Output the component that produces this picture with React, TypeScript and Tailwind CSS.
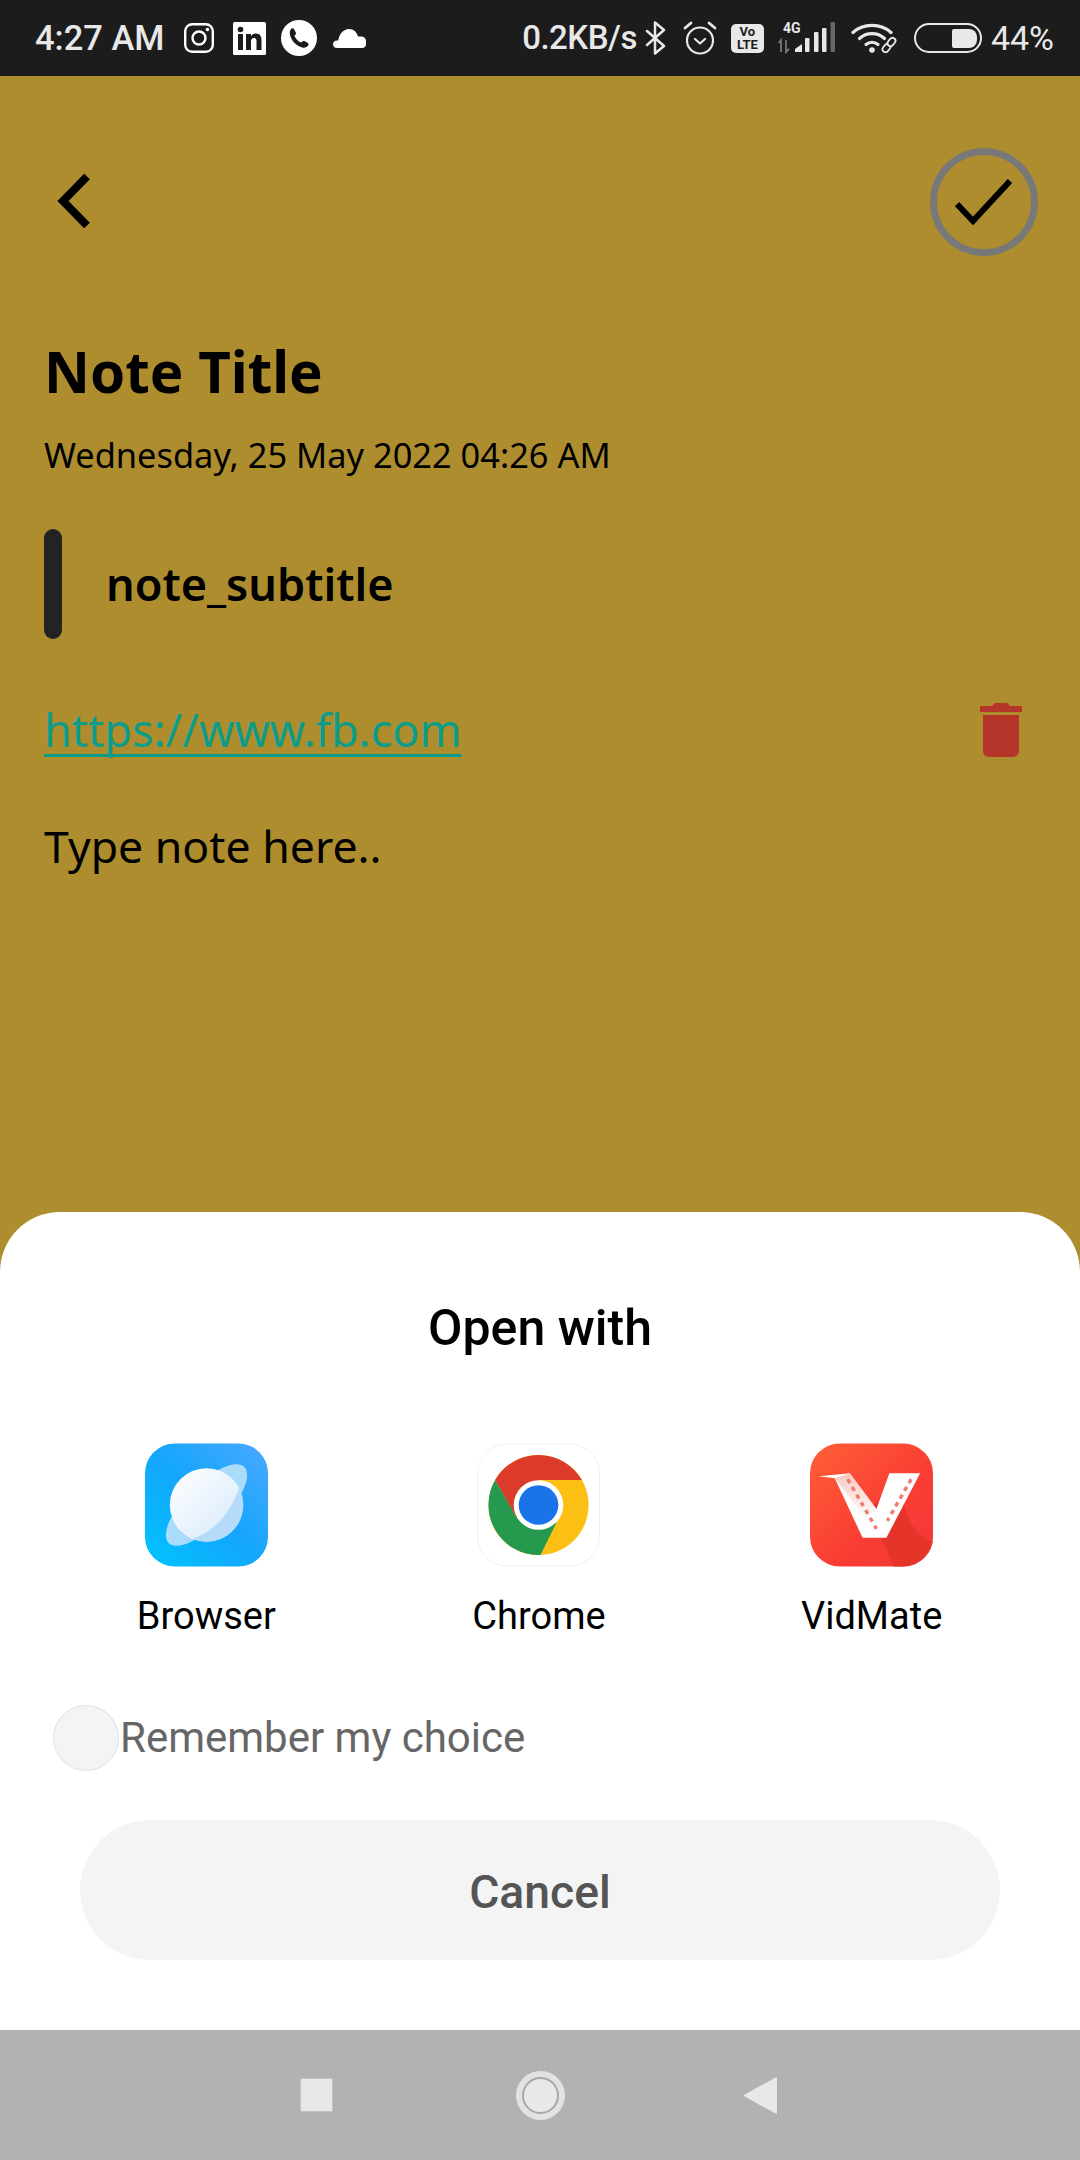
import { useId } from "react"

const Instagram = () => (
  <svg width="30" height="30" viewBox="0 0 30 30" fill="none" stroke="#fff" strokeWidth="2.4">
    <rect x="1.2" y="1.2" width="27.6" height="27.6" rx="7" />
    <circle cx="15" cy="15" r="6.500" />
    <circle cx="23.500" cy="6.500" r="1.800" fill="#fff" stroke="none" />
  </svg>
)

const LinkedIn = () => (
  <svg width="33" height="33" viewBox="0 0 33 33">
    <rect width="33" height="33" rx="1.500" fill="#fff" />
    <rect x="5" y="12" width="5" height="16" fill="#1c1c1c" />
    <circle cx="7.500" cy="7.500" r="2.800" fill="#1c1c1c" />
    <path d="M13 12h5v2.200c1-1.600 2.600-2.600 4.800-2.600 4.300 0 5.700 2.800 5.700 6.800V28h-5v-8.500c0-2-.6-3.500-2.400-3.500-2 0-3.100 1.400-3.100 3.500V28h-5z" fill="#1c1c1c" />
  </svg>
)

const WhatsApp = () => (
  <svg width="36" height="36" viewBox="0 0 36 36">
    <circle cx="18" cy="18" r="18" fill="#fff" />
    <path d="M10 9c1-1 2.400-1.200 3 0l1.800 3.600c.4.8.2 1.500-.4 2.100l-1 1.100c1 2.800 3.600 5.600 6.800 6.800l1.100-1.100c.6-.6 1.400-.8 2.200-.4l3.400 1.800c1 .6.900 2-.2 3.100-1.500 1.500-3.300 2-5.400 1.400-6-1.700-10.500-6.200-12.200-12C8.500 12.800 8.800 10.300 10 9z" fill="#1c1c1c" />
  </svg>
)

const Cloud = () => (
  <svg width="33" height="19" viewBox="0 0 33 19">
    <path d="M4 19C1.500 19 0 17.500 0 15.300c0-2.200 1.800-3.800 4-3.800h1.200C6.200 5 10.500 0 16 0c4.800 0 7.600 3 9 7.400h3.200c2.800 0 4.800 1.900 4.800 4.400v3.500c0 2.400-1.600 3.700-4 3.700z" fill="#fff" />
  </svg>
)

const BluetoothGlyph = () => (
  <svg width="21" height="34" viewBox="0 0 21 34" fill="none" stroke="#e8e8e8" strokeWidth="2.500" strokeLinejoin="round" strokeLinecap="round">
    <path d="M2 10l17 15-9 7.500V1.500L19 9 2 24" />
  </svg>
)

const Alarm = () => (
  <svg width="34" height="34" viewBox="0 0 34 34" fill="none" stroke="#e8e8e8" strokeWidth="2.200" strokeLinecap="round" strokeLinejoin="round">
    <circle cx="17" cy="19.500" r="13" />
    <path d="M12 18l5 4.500 5-4.500" />
    <path d="M2 7l6-5M32 7l-6-5" strokeWidth="2.800" />
  </svg>
)

const Signal = () => (
  <svg width="57" height="32" viewBox="0 0 57 32">
    <path d="M3 30V18l-2.500 3M8 18v12l3-3" fill="none" stroke="#777" strokeWidth="1.800" />
    <path d="M17 30v-3l7-5v8z" fill="#e8e8e8" />
    <rect x="27" y="16" width="4.500" height="14" rx="1" fill="#e8e8e8" />
    <rect x="36" y="10" width="4.500" height="20" rx="1" fill="#e8e8e8" />
    <rect x="44" y="6" width="4.500" height="24" rx="1" fill="#e8e8e8" />
    <rect x="52.500" y="0" width="4.500" height="30" rx="1" fill="#666" />
  </svg>
)

const Wifi = () => (
  <svg width="47" height="30" viewBox="0 0 47 30" fill="none" stroke="#e8e8e8" strokeWidth="3.200" strokeLinecap="round">
    <path d="M2 9.500C12 0 30 0 40 9.500" />
    <path d="M8.500 15.500c7-6.500 18-6.500 25 0" />
    <path d="M15 21.500c3.500-3 8.500-3 12 0" />
    <circle cx="21" cy="27" r="2.800" fill="#e8e8e8" stroke="none" />
    <g strokeWidth="1.800" fill="#1c1c1c">
      <rect x="31" y="22" width="9" height="6" rx="3" transform="rotate(-50 35.500 25)" />
      <rect x="36" y="16" width="9" height="6" rx="3" transform="rotate(-50 40.500 19)" />
    </g>
  </svg>
)

const Battery = () => (
  <div className="flex h-[30px] w-[68px] items-center justify-end rounded-full border-[2.5px] border-[#e8e8e8] pr-[3px]">
    <div className="h-[19px] w-[25px] rounded-l-[2px] rounded-r-[8px] bg-[#e8e8e8]" />
  </div>
)

const StatusBar = () => (
  <div className="flex h-[76px] shrink-0 items-center justify-between bg-[#1c1c1c] pl-[35px] pr-[26px] font-['Roboto',sans-serif] text-[#e8e8e8]">
    <div className="flex items-center">
      <span className="text-[34.5px] font-medium leading-[40px]">4:27 AM</span>
      <span className="ml-[19px] flex"><Instagram /></span>
      <span className="ml-[19px] flex"><LinkedIn /></span>
      <span className="ml-[15px] flex"><WhatsApp /></span>
      <span className="ml-[16px] flex"><Cloud /></span>
    </div>
    <div className="flex items-center">
      <span className="text-[33px] font-medium leading-[40px] tracking-[-0.5px]">0.2KB/s</span>
      <span className="ml-[8px] flex"><BluetoothGlyph /></span>
      <span className="ml-[17px] flex"><Alarm /></span>
      <span className="ml-[14px] flex h-[29px] w-[33px] flex-col items-center justify-center rounded-[5px] bg-[#e8e8e8] text-[13px] font-bold leading-[13px] text-[#1c1c1c]">
        <span>Vo</span>
        <span>LTE</span>
      </span>
      <span className="relative ml-[14px] flex">
        <span className="absolute -top-[1px] left-[5px] text-[14px] font-bold leading-[14px]">4G</span>
        <Signal />
      </span>
      <span className="ml-[16px] flex"><Wifi /></span>
      <span className="ml-[16px] flex"><Battery /></span>
      <span className="ml-[9px] text-[34px] leading-[40px]">44%</span>
    </div>
  </div>
)

const BrowserIcon = () => {
  const id = useId()
  return (
    <svg width="123" height="124" viewBox="0 0 124 124">
      <defs>
        <linearGradient id={`${id}bg`} x1="0" y1="1" x2="1" y2="0">
          <stop offset="0" stopColor="#00c4ff" />
          <stop offset="0.5" stopColor="#14a6fb" />
          <stop offset="1" stopColor="#4aa8ff" />
        </linearGradient>
        <linearGradient id={`${id}ball`} x1="0" y1="0" x2="1" y2="1">
          <stop offset="0" stopColor="#ffffff" />
          <stop offset="1" stopColor="#d5e8fb" />
        </linearGradient>
      </defs>
      <rect width="124" height="124" rx="30" fill={`url(#${id}bg)`} />
      <ellipse cx="62" cy="62" rx="54" ry="21" transform="rotate(-45 62 62)" fill="#a9dcfb" />
      <circle cx="62" cy="62" r="37" fill={`url(#${id}ball)`} />
      <path d="M95 45a37 37 0 0 1-47 51c20-6 37-24 47-51z" fill="#b4dcfa" />
    </svg>
  )
}

const ChromeIcon = () => (
  <svg width="123" height="124" viewBox="0 0 124 124">
    <rect x="0.500" y="0.500" width="123" height="123" rx="30" fill="#fff" stroke="#f0f0f0" />
    <circle cx="62" cy="62" r="50.500" fill="#fcc014" />
    <path d="M62 11.500a50.500 50.500 0 0 1 43.700 25.300H62L40 75 18.300 36.800A50.500 50.500 0 0 1 62 11.500z" fill="#dc3b2c" />
    <path d="M18.300 36.800L40 75l40 5-16 32.400A50.500 50.500 0 0 1 18.300 36.800z" fill="#259a4e" />
    <circle cx="62" cy="62" r="25" fill="#fff" />
    <circle cx="62" cy="62" r="20" fill="#1a73e8" />
  </svg>
)

const VidMateIcon = () => {
  const id = useId()
  const strip = `${id}strip`
  return (
    <svg width="123" height="124" viewBox="0 0 124 124">
      <defs>
        <linearGradient id={`${id}bg`} x1="0" y1="0" x2="1" y2="1">
          <stop offset="0" stopColor="#ff5f38" />
          <stop offset="0.6" stopColor="#f93d33" />
          <stop offset="1" stopColor="#f4363a" />
        </linearGradient>
        <linearGradient id={strip} x1="0" y1="0" x2="0" y2="1">
          <stop offset="0" stopColor="#f8c9c2" />
          <stop offset="1" stopColor="#ffffff" />
        </linearGradient>
      </defs>
      <rect width="124" height="124" rx="30" fill={`url(#${id}bg)`} />
      <path d="M84 124c-6-22-20-34-24-60l34-20c-2 30 14 50 30 56v-6a30 30 0 0 1-30 30z" fill="#e5352a" />
      <path d="M9 33l31-3 27 36 13-36h31L77 95H53L25 35z" fill="#ffffff" />
      <path d="M25 35l15-5 27 36-9 12z" fill={`url(#${strip})`} />
      <path d="M38 36l29 50M102 36L78 78" fill="none" stroke="#ee7d74" strokeWidth="3.500" strokeDasharray="4.500 4.500" />
    </svg>
  )
}

const apps = [
  { name: "Browser", icon: <BrowserIcon /> },
  { name: "Chrome", icon: <ChromeIcon /> },
  { name: "VidMate", icon: <VidMateIcon /> },
]

const NoteEditor = () => (
  <div className="flex flex-1 flex-col bg-[#ad8d2d] pl-[44px] pr-[42px] pt-[72px] font-['Noto_Sans',sans-serif] text-black">
    <div className="flex items-start justify-between">
      <svg className="ml-[12px] mt-[26px]" width="35" height="54" viewBox="0 0 35 54" fill="none" stroke="#000" strokeWidth="8">
        <path d="M31 2.500L7 27l24 24.500" />
      </svg>
      <div className="flex h-[108px] w-[108px] items-center justify-center rounded-full border-[7px] border-[#787878]">
        <svg width="58" height="46" viewBox="0 0 58 46" fill="none" stroke="#000" strokeWidth="6">
          <path d="M2 25l16 17L55 2" />
        </svg>
      </div>
    </div>
    <h1 className="mt-[81px] text-[56.5px] font-bold leading-[70px]">Note Title</h1>
    <p className="mt-[25px] text-[34.4px] leading-[46px]">Wednesday, 25 May 2022 04:26 AM</p>
    <div className="mt-[51px] flex h-[110px] items-center">
      <div className="h-full w-[18px] rounded-full bg-[#232323]" />
      <span className="ml-[44px] text-[45px] font-semibold">note_subtitle</span>
    </div>
    <div className="mt-[61px] flex items-center justify-between pr-[16px]">
      <a className="text-[45px] leading-[60px] text-[#0c9c8a] underline decoration-[length:3px] underline-offset-[7px] [text-decoration-skip-ink:none]">https://www.fb.com</a>
      <svg width="42" height="54" viewBox="0 0 42 54" fill="#b5352b">
        <rect x="0" y="3" width="42" height="6" />
        <path d="M12 3l3-3h12l3 3z" />
        <path d="M3 12h36v36a6 6 0 0 1-6 6H9a6 6 0 0 1-6-6z" />
      </svg>
    </div>
    <p className="mt-[56px] text-[44.6px] leading-[60px]">Type note here..</p>
  </div>
)

const OpenWithSheet = () => (
  <div className="flex h-[818px] shrink-0 flex-col rounded-t-[60px] bg-white font-['Roboto',sans-serif]">
    <h2 className="mt-[87px] text-center text-[50px] font-medium leading-[58px] text-black">Open with</h2>
    <div className="mt-[86px] grid grid-cols-3 pl-[40px] pr-[42px]">
      {apps.map((app) => (
        <div key={app.name} className="flex flex-col items-center">
          {app.icon}
          <span className="mt-[27px] text-[38px] leading-[44px] text-black">{app.name}</span>
        </div>
      ))}
    </div>
    <div className="ml-[53px] mt-[67px] flex items-center">
      <div className="h-[66px] w-[66px] rounded-full border border-[#e2e2e2] bg-[#f4f4f4]" />
      <span className="ml-[1px] text-[42px] leading-[50px] text-[#666666]">Remember my choice</span>
    </div>
    <button className="mx-[80px] mt-[49px] h-[140px] rounded-full bg-[#f4f4f4] pt-[6px] text-[46.3px] font-medium text-[#555555]">Cancel</button>
  </div>
)

const NavBar = () => (
  <div className="flex h-[130px] shrink-0 items-center justify-center bg-[#b2b2b2] pr-[3px]">
    <div className="h-[34px] w-[33px] rounded-[2px] border border-[#c4c4c4] bg-[#e8e8e8]" />
    <div className="ml-[183px] flex h-[49px] w-[49px] items-center justify-center rounded-full bg-[#e2e2e2]">
      <div className="h-[37px] w-[37px] rounded-full border-2 border-[#a8a8a8] bg-[#e8e8e8]" />
    </div>
    <svg className="ml-[179px]" width="33" height="37" viewBox="0 0 33 37">
      <path d="M33 1v35c0 1-1 1-1.500.5L.7 19.500c-1-.5-1-1.500 0-2L31.500.5C32 0 33 0 33 1z" fill="#e8e8e8" />
    </svg>
  </div>
)

export default function App() {
  return (
    <div className="flex h-[2160px] w-[1080px] flex-col overflow-hidden bg-[#ad8d2d]">
      <StatusBar />
      <NoteEditor />
      <OpenWithSheet />
      <NavBar />
    </div>
  )
}
